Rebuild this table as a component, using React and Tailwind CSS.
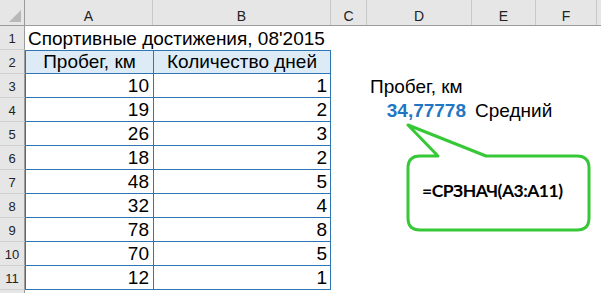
import React from 'react';

const cols = [
  { key: 'A', w: 'w-[128px]' },
  { key: 'B', w: 'w-[178px]' },
  { key: 'C', w: 'w-[36px]' },
  { key: 'D', w: 'w-[105px]' },
  { key: 'E', w: 'w-[64px]' },
  { key: 'F', w: 'w-[61px]' },
];

const data = [
  [10, 1],
  [19, 2],
  [26, 3],
  [18, 2],
  [48, 5],
  [32, 4],
  [78, 8],
  [70, 5],
  [12, 1],
];

const RowHead = ({ n }) => (
  <div className="w-[25px] shrink-0 bg-[#e6e6e6] border-r border-b border-r-[#9b9b9b] border-b-[#d0d0d0] flex items-end justify-center pb-[4px] text-[13px] leading-none text-[#222]">
    {n}
  </div>
);

const Callout = () => (
  <div className="absolute left-0 top-0 pointer-events-none">
    <svg width="601" height="293" className="block">
      <path
        d="M420 156 L438 156 L408 125 L486 156 L577 156 Q589 156 589 168 L589 218 Q589 230 577 230 L420 230 Q408 230 408 218 L408 168 Q408 156 420 156 Z"
        fill="#ffffff"
        stroke="#37c837"
        strokeWidth="3"
        strokeLinejoin="round"
      />
    </svg>
    <div className="absolute left-[422px] top-[181px] font-['Lato',sans-serif] font-bold text-[17.5px] tracking-[-0.5px] leading-[20px] text-black whitespace-nowrap">
      =СРЗНАЧ(A3:A11)
    </div>
  </div>
);

export default function App() {
  return (
    <div className="relative w-[601px] h-[293px] overflow-hidden bg-white font-['Liberation_Sans',Arial,sans-serif] text-[19px] text-black">
      {/* column headers */}
      <div className="flex h-[26px] bg-[#e6e6e6] border-b border-[#9b9b9b]">
        <div className="w-[25px] shrink-0 border-r border-[#9b9b9b] relative">
          <div className="absolute right-[3px] bottom-[3px] w-0 h-0 border-l-[12px] border-l-transparent border-b-[12px] border-b-[#b8b8b8]" />
        </div>
        {cols.map((c) => (
          <div
            key={c.key}
            className={`${c.w} shrink-0 border-r border-[#c8c8c8] flex items-end justify-center pb-[2px] text-[14px] leading-none text-[#222]`}
          >
            {c.key}
          </div>
        ))}
        <div className="flex-1" />
      </div>

      {/* row 1 */}
      <div className="flex h-[24px]">
        <RowHead n={1} />
        <div className="flex items-end pl-[3px] whitespace-nowrap leading-[22px]">
          Спортивные достижения, 08'2015
        </div>
      </div>

      {/* row 2: table header */}
      <div className="flex h-[24px]">
        <RowHead n={2} />
        <div className="w-[128px] shrink-0 bg-[#ddebf7] border-t border-l border-b border-[#2e75b6] flex items-end justify-center leading-[22px]">
          Пробег, км
        </div>
        <div className="w-[178px] shrink-0 bg-[#ddebf7] border border-[#2e75b6] flex items-end justify-center leading-[22px]">
          Количество дней
        </div>
      </div>

      {/* data rows */}
      {data.map(([km, days], i) => (
        <div key={i} className="flex h-[24px] leading-[22px]">
          <RowHead n={i + 3} />
          <div className="w-[128px] shrink-0 border-l border-b border-[#2e75b6] flex items-end justify-end pr-[4px]">
            {km}
          </div>
          <div className="w-[178px] shrink-0 border-l border-r border-b border-[#2e75b6] flex items-end justify-end pr-[3px]">
            {days}
          </div>
          <div className="w-[36px] shrink-0" />
          {i === 0 && (
            <div className="flex items-end pl-[3px] whitespace-nowrap">Пробег, км</div>
          )}
          {i === 1 && (
            <>
              <div className="w-[105px] shrink-0 flex items-end justify-end pr-[6px] font-bold text-[#1f77c4]">
                34,77778
              </div>
              <div className="flex items-end pl-[3px] whitespace-nowrap">Средний</div>
            </>
          )}
        </div>
      ))}

      <div className="flex h-[24px]">
        <div className="w-[25px] shrink-0 bg-[#e6e6e6] border-r border-[#9b9b9b]" />
      </div>

      <Callout />
    </div>
  );
}
